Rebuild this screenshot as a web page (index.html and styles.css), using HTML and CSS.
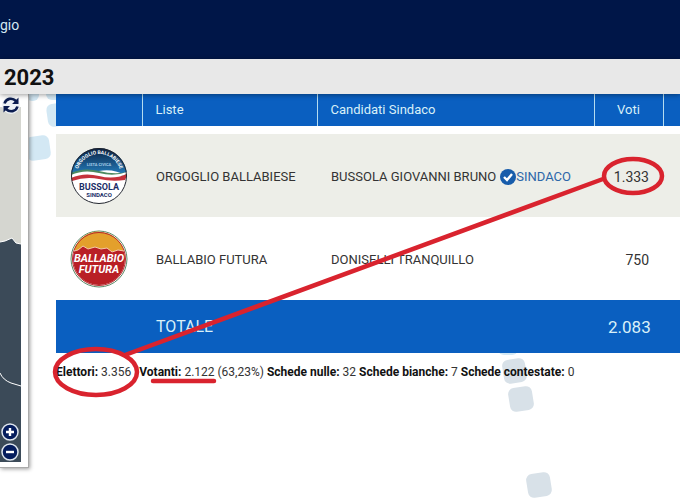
FILE: index.html
```html
<!DOCTYPE html>
<html lang="it">
<head>
  <meta charset="UTF-8">
  <meta name="viewport" content="width=device-width, initial-scale=1.0">
  <title>Elezioni comunali 2023</title>
  <link rel="stylesheet" href="styles.css">
</head>
<body>
  <header class="topbar">gio</header>
  <h1 class="title">2023</h1>

  <main class="content">
    <!-- quadratini di sfondo -->
    <svg class="decor" width="680" height="407" aria-hidden="true">
      <g fill="#d3e8f4">
        <rect x="26" y="-14" width="13" height="21" rx="6"/>
        <rect x="47" y="9" width="24" height="23" rx="6" transform="rotate(-8 59 20)"/>
        <rect x="46" y="-16" width="22" height="22" rx="6"/>
        <rect x="26" y="42" width="24" height="24" rx="6" transform="rotate(-8 38 54)"/>
        <rect x="498" y="240" width="20" height="21" rx="6"/>
      </g>
      <g fill="#d8e1e8">
        <rect x="503" y="265" width="23" height="24" rx="6" transform="rotate(-9 514 277)"/>
        <rect x="509" y="293" width="24" height="24" rx="6" transform="rotate(-9 521 305)"/>
        <rect x="527" y="379" width="24" height="24" rx="6" transform="rotate(-9 539 391)"/>
      </g>
    </svg>

    <aside class="map-panel">
      <div class="map">
        <svg class="map-shape" width="21" height="355" aria-hidden="true">
          <path d="M0 135 L5 134 L12 131 L16 136 L21 137 V355 H0Z" fill="#3b4a58"/>
          <path d="M0 135 L5 134 L12 131 L16 136 L21 137" fill="none" stroke="#fff"/>
          <path d="M0 266 Q3 273 11 276 L21 279" fill="none" stroke="#fff"/>
        </svg>
        <button class="map-btn" aria-label="Aggiorna">
          <svg width="20" height="20" viewBox="0 0 20 20">
            <circle cx="10" cy="10" r="9" fill="#eef2f5"/>
            <path d="M3.5 8.5 C5 3.5 11 2 15 6 M16.5 11.5 C15 16.5 9 18 5 14" fill="none" stroke="#0c1d50" stroke-width="2.6"/>
            <path d="M17.5 2.5 V9 H11Z M2.500 17.500 V11 H9Z" fill="#0c1d50"/>
          </svg>
        </button>
        <div class="map-zoom">
          <button class="map-btn" aria-label="Ingrandisci">
            <svg width="20" height="20" viewBox="0 0 20 20">
              <circle cx="10" cy="10" r="8" fill="#041c5c" stroke="#dfe6ee" stroke-width="1.5"/>
              <path d="M6 10 H14 M10 6 V14" stroke="#fff" stroke-width="2.4"/>
            </svg>
          </button>
          <button class="map-btn" aria-label="Riduci">
            <svg width="20" height="20" viewBox="0 0 20 20">
              <circle cx="10" cy="10" r="8" fill="#041c5c" stroke="#dfe6ee" stroke-width="1.5"/>
              <path d="M6 10 H14" stroke="#fff" stroke-width="2.4"/>
            </svg>
          </button>
        </div>
      </div>
    </aside>

    <section class="results">
      <table class="votes">
        <colgroup>
          <col class="col-logo">
          <col class="col-list">
          <col>
          <col class="col-votes">
          <col class="col-more">
        </colgroup>
        <thead>
          <tr>
            <th></th>
            <th>Liste</th>
            <th>Candidati Sindaco</th>
            <th class="center">Voti</th>
            <th></th>
          </tr>
        </thead>
        <tbody>
          <tr class="spacer"><td colspan="5"></td></tr>
          <tr class="elected">
            <td class="logo">
              <svg width="58" height="58" viewBox="0 0 58 58" role="img" aria-label="Orgoglio Ballabiese">
                <defs>
                  <linearGradient id="sky" x1="0" y1="0" x2="0" y2="1">
                    <stop offset="0" stop-color="#0c2040"/>
                    <stop offset="1" stop-color="#2583c4"/>
                  </linearGradient>
                  <path id="arc" d="M7 29 A22 22 0 0 1 51 29"/>
                </defs>
                <circle cx="29" cy="29" r="28" fill="#fff"/>
                <path d="M1 29 A28 28 0 0 1 57 29 Q43 21 29 24 T1 29Z" fill="url(#sky)"/>
                <path d="M1 26 Q14 20 29 24 T57 25 V28 Q42 31 29 27 T1 29Z" fill="#4d8a60"/>
                <path d="M1 28 Q14 22 29 26 T57 25 V27 Q42 33 29 29 T1 31Z" fill="#fff"/>
                <path d="M1 31 Q14 25 29 29 T57 27 Q56 31 55 33 Q42 35 29 32 T2 34Z" fill="#c5323c"/>
                <circle cx="29" cy="29" r="27.5" fill="none" stroke="#20242c"/>
                <text class="logo-arc"><textPath href="#arc" startOffset="50%">ORGOGLIO BALLABIESE</textPath></text>
                <text class="logo-tiny" x="29" y="19">LISTA CIVICA</text>
                <text class="logo-name" x="29" y="43">BUSSOLA</text>
                <text class="logo-sub" x="29" y="50">SINDACO</text>
              </svg>
            </td>
            <td>ORGOGLIO BALLABIESE</td>
            <td>
              <div class="candidate">
                <span>BUSSOLA GIOVANNI BRUNO</span>
                <span class="badge">
                  <svg width="16" height="16" viewBox="0 0 16 16" aria-hidden="true">
                    <circle cx="8" cy="8" r="8" fill="#175cab"/>
                    <path d="M4 8 L7 11 L12 5" fill="none" stroke="#fff" stroke-width="2.4"/>
                  </svg>SINDACO</span>
              </div>
            </td>
            <td class="num">1.333</td>
            <td></td>
          </tr>
          <tr>
            <td class="logo">
              <svg width="58" height="58" viewBox="0 0 58 58" role="img" aria-label="Ballabio Futura">
                <circle cx="29" cy="29" r="28" fill="#fff" stroke="#5c8a68"/>
                <circle cx="29" cy="29" r="26" fill="#b91f25"/>
                <path d="M4 20 A26 26 0 0 1 54 21 L48 20 L42 22 L37 18 L31 19 L25 17 L18 19 L13 16 L8 20Z" fill="#e3a02c"/>
                <circle cx="29" cy="29" r="26.5" fill="none" stroke="#b5282b"/>
                <path d="M4 21 L8 20 L13 16 L18 19 L25 17 L31 19 L37 18 L42 22 L48 20 L54 21" fill="none" stroke="#f3c9a8"/>
                <text class="logo-futura" x="29" y="32">BALLABIO</text>
                <text class="logo-futura" x="29" y="43">FUTURA</text>
              </svg>
            </td>
            <td>BALLABIO FUTURA</td>
            <td>DONISELLI TRANQUILLO</td>
            <td class="num">750</td>
            <td></td>
          </tr>
        </tbody>
        <tfoot>
          <tr>
            <td></td>
            <td>TOTALE</td>
            <td></td>
            <td class="num">2.083</td>
            <td></td>
          </tr>
        </tfoot>
      </table>
      <p class="summary">
        <span class="voters"><b>Elettori:</b> 3.356</span>
        <span><b>Votanti:</b> 2.122 (63,23%) <b>Schede nulle:</b> 32 <b>Schede bianche:</b> 7 <b>Schede contestate:</b> 0</span>
      </p>
    </section>

    <!-- segni a penna rossa -->
    <svg class="marks" width="680" height="407" aria-hidden="true">
      <g fill="none" stroke="#d9232e" stroke-width="4.500" stroke-linecap="round">
        <ellipse cx="96" cy="278" rx="41" ry="23"/>
        <ellipse cx="633" cy="82" rx="29" ry="17"/>
        <path d="M125 261 L603 85"/>
        <path d="M153 287 H214"/>
      </g>
    </svg>
  </main>
</body>
</html>
```
FILE: styles.css
```css
* {
  box-sizing: border-box;
}

body {
  margin: 0;
  font-family: Roboto, "Liberation Sans", sans-serif;
  font-size: 13px;
  color: #333;
  background: #fff;
  overflow: hidden;
}

.topbar {
  height: 59px;
  padding-top: 15px;
  font-size: 14px;
  line-height: 20px;
  color: #d5e8f2;
  background: #001648;
}

.title {
  position: relative;
  margin: 0;
  padding: 2px 4px 0;
  font-size: 22px;
  line-height: 33px;
  color: #111;
  background: #e8e8e8;
  box-shadow: 0 1px 5px rgba(0, 0, 0, 0.4);
  z-index: 1;
}

.content {
  position: relative;
  display: flex;
  align-items: flex-start;
  gap: 27px;
  min-height: 407px;
}

.decor,
.marks {
  position: absolute;
  top: 0;
  left: 0;
  pointer-events: none;
}

.marks {
  z-index: 2;
}

/* mappa */
.map-panel {
  position: relative;
  flex: none;
  width: 29px;
  padding: 13px 7px 5px 0;
  background: #fff;
  border-right: 1px solid #aaa;
  border-bottom: 1px solid #aaa;
  box-shadow: 1px 1px 4px rgba(0, 0, 0, 0.4);
}

.map {
  position: relative;
  height: 355px;
  background: #d5d6d0;
}

.map-shape {
  display: block;
}

.map-btn {
  display: block;
  width: 20px;
  height: 20px;
  padding: 0;
  border: 0;
  background: none;
  cursor: pointer;
}

.map-btn svg {
  display: block;
}

.map > .map-btn {
  position: absolute;
  top: -12px;
  left: 1px;
}

.map-zoom {
  position: absolute;
  bottom: 0;
  left: 0;
}

/* risultati */
.results {
  position: relative;
  flex: 1;
  min-width: 0;
}

.votes {
  width: 100%;
  table-layout: fixed;
  border-collapse: collapse;
}

.col-logo {
  width: 86px;
}

.col-list {
  width: 175px;
}

.col-votes {
  width: 69px;
}

.col-more {
  width: 17px;
}

.votes th {
  height: 32px;
  padding: 0 13px 2px;
  font-size: 13px;
  font-weight: normal;
  text-align: left;
  color: #d9f0f8;
  background: #0a5fc0;
  border-left: 1px solid #b5dcf0;
}

.votes th:first-child {
  border-left: 0;
}

.votes th:last-child {
  padding: 0;
}

.votes .center {
  text-align: center;
}

.votes td {
  height: 83px;
  padding: 2px 14px 0;
  white-space: nowrap;
}

.votes td:last-child {
  padding: 0;
}

.votes .spacer td {
  height: 8px;
}

.votes .elected td {
  background: #edeee8;
}

.votes .logo {
  padding-top: 0;
}

.votes .logo svg {
  display: block;
}

.votes .num {
  font-size: 14px;
  text-align: right;
}

.votes tfoot td {
  height: 53px;
  padding-top: 0;
  font-size: 16px;
  color: #d9f0f8;
  background: #0a5fc0;
}

.votes tfoot .num {
  font-size: 17px;
}

.candidate {
  display: flex;
  align-items: center;
  gap: 4px;
}

.badge {
  display: flex;
  align-items: center;
  color: #2c66a8;
}

.summary {
  display: flex;
  gap: 8px;
  margin: 0;
  padding-top: 10px;
  font-size: 12px;
  line-height: 18px;
  white-space: nowrap;
}

.summary b {
  color: #111;
}

/* testi dei simboli */
.votes text {
  font-weight: bold;
  text-anchor: middle;
}

.logo-arc {
  font-size: 5px;
  fill: #fff;
}

.logo-tiny {
  font-size: 4px;
  fill: #a5cce8;
}

.logo-name {
  font-size: 9px;
  fill: #1b2e68;
}

.logo-sub {
  font-size: 6px;
  fill: #1b2e68;
}

.logo-futura {
  font-size: 11px;
  font-style: italic;
  fill: #fff;
}
```
